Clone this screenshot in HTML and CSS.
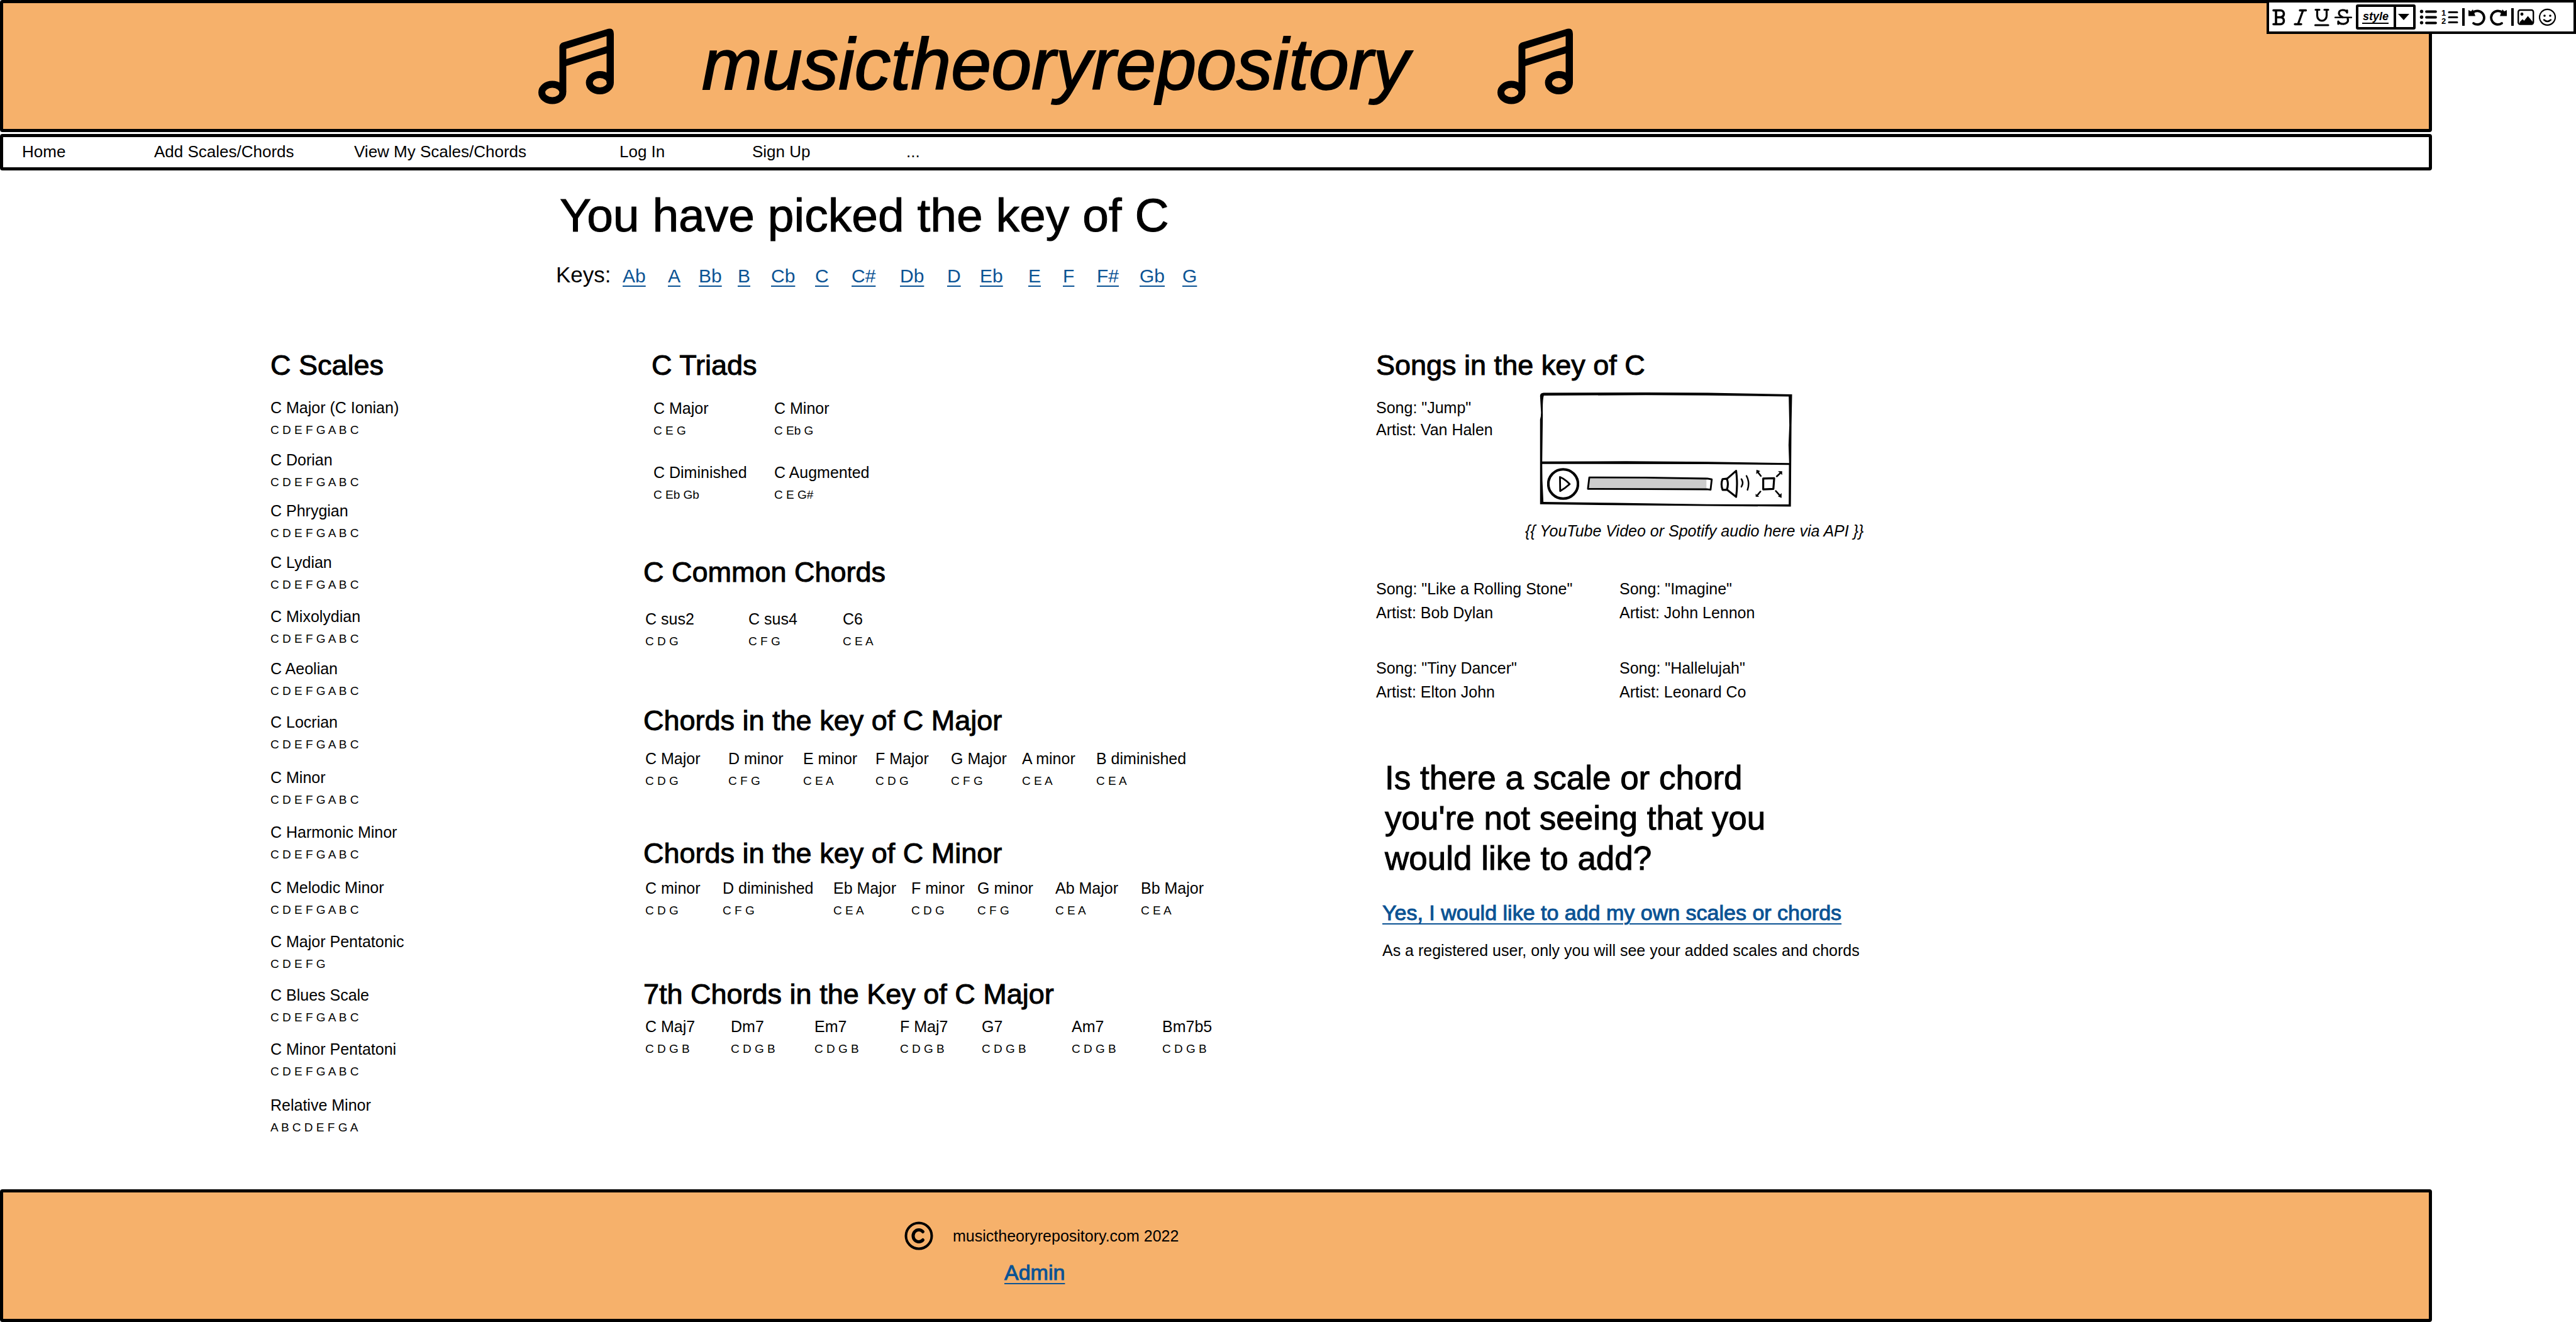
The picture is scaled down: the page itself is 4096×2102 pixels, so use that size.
FILE: index.html
```html
<!DOCTYPE html>
<html lang="en">
<head>
<meta charset="utf-8">
<title>musictheoryrepository</title>
<link rel="stylesheet" href="styles.css">
</head>
<body>
<svg class="defs" aria-hidden="true">
  <symbol id="note" viewBox="0 0 120 121">
    <path fill-rule="evenodd" d="M33.500 101V30Q33.500 25 38 22.800L111 .8Q120-1.500 120 9V87H108.500V40L44.400 60V101ZM44.400 32.700V49L108.500 28.600V12.600Z"/>
    <ellipse cx="22.200" cy="102" rx="16.700" ry="13" fill="none" stroke="#000" stroke-width="11"/>
    <ellipse cx="97.800" cy="86.500" rx="16.700" ry="13" fill="none" stroke="#000" stroke-width="11"/>
  </symbol>
</svg>

<div class="toolbar" role="toolbar" aria-label="Text formatting">
  <button class="tool" aria-label="Bold"><svg viewBox="0 0 28 46"><path d="M5 12.500H16a5.500 5.500 0 0 1 0 11H10M16 23.500a5.500 5.500 0 0 1 0 11H5M9 12.500V34.500" stroke-width="3.600"/></svg></button>
  <button class="tool" aria-label="Italic"><svg viewBox="0 0 28 46"><path d="M13 12.500H22.500M5 34.500H15M18 12.500L10 34.500" stroke-width="3.400"/></svg></button>
  <button class="tool" aria-label="Underline"><svg viewBox="0 0 28 46"><path d="M4 11.500H10M18 11.500H24M6.500 11.500V21a7.500 8 0 0 0 15 0V11.500M3.500 36H24" stroke-width="3.200"/></svg></button>
  <button class="tool" aria-label="Strikethrough"><svg viewBox="0 0 28 46"><path d="M20 16V12.500M20 16C18 10.500 7 10.500 7 17C7 20 9 21.500 13 23.500M21 25.500C23 31 18 34.500 13 34C10 34 8 33 6 31M6 34V30" stroke-width="3.200"/><path d="M1 23.700H27" stroke-width="2.400"/></svg></button>
  <span class="style-picker">
    <select aria-label="Text style"><option>style</option></select>
    <svg class="style-picker__arrow" viewBox="0 0 18 10" aria-hidden="true"><path d="M0 0H18L9 10Z" class="solid"/></svg>
  </span>
  <button class="tool" aria-label="Bulleted list"><svg viewBox="0 0 28 46"><g class="solid"><circle cx="3.500" cy="14.200" r="2.700"/><circle cx="3.500" cy="23.300" r="2.700"/><circle cx="3.500" cy="32.100" r="2.700"/></g><path d="M11 14.500H26M11 23.500H26M11 32.500H26" stroke-width="3.800"/></svg></button>
  <button class="tool" aria-label="Numbered list"><svg viewBox="0 0 28 46"><text x="1" y="21">1</text><text x="1" y="34">2</text><path d="M13 15.500H26M13 23.500H26M13 31.500H26" stroke-width="3"/></svg></button>
  <span class="toolbar__rule"></span>
  <button class="tool" aria-label="Undo"><svg viewBox="0 0 28 46"><path d="M7 16A10.800 10.800 0 1 1 8 33" stroke-width="3.800"/><path class="solid" d="M0 12L4 14 7 11 11 21.500H0Z"/></svg></button>
  <button class="tool" aria-label="Redo"><svg viewBox="0 0 28 46"><path d="M20 16A10.800 10.800 0 1 0 19 33" stroke-width="3.800"/><path class="solid" d="M27 12L23 14 20 11 16 21.500H27Z"/></svg></button>
  <span class="toolbar__rule"></span>
  <button class="tool" aria-label="Insert image"><svg viewBox="0 0 28 46"><rect x="1.200" y="12" width="24" height="22.500" rx="3" stroke-width="2.400"/><circle class="solid" cx="7" cy="18.500" r="2.400"/><path class="solid" d="M3.500 34V31L8 26.500 10.500 29 16.500 21.500 24 30.500V34Z"/></svg></button>
  <button class="tool" aria-label="Insert emoji"><svg viewBox="0 0 28 46"><circle cx="13.500" cy="23.300" r="12.500" stroke-width="2.200"/><circle class="solid" cx="9" cy="21" r="1.800"/><circle class="solid" cx="18" cy="21" r="1.800"/><path d="M8 27.500Q13.500 32.500 19 27.500" stroke-width="2.400"/></svg></button>
</div>

<div class="page">
  <header class="banner">
    <svg class="banner__note" aria-hidden="true"><use href="#note"/></svg>
    <h1>musictheoryrepository</h1>
    <svg class="banner__note" aria-hidden="true"><use href="#note"/></svg>
  </header>

  <nav class="menu">
    <a href="#">Home</a>
    <a href="#">Add Scales/Chords</a>
    <a href="#">View My Scales/Chords</a>
    <a href="#">Log In</a>
    <a href="#">Sign Up</a>
    <a href="#">...</a>
  </nav>

  <main>
    <section class="picker">
      <h2 class="picker__title">You have picked the key of C</h2>
      <div class="keys">
        <span class="keys__label">Keys:</span>
        <a href="#">Ab</a><a href="#">A</a><a href="#">Bb</a><a href="#">B</a><a href="#">Cb</a><a href="#">C</a><a href="#">C#</a><a href="#">Db</a><a href="#">D</a><a href="#">Eb</a><a href="#">E</a><a href="#">F</a><a href="#">F#</a><a href="#">Gb</a><a href="#">G</a>
      </div>
    </section>

    <div class="columns">
      <section>
        <h3>C Scales</h3>
        <dl class="scales">
          <div><dt>C Major (C Ionian)</dt><dd>C D E F G A B C</dd></div>
          <div><dt>C Dorian</dt><dd>C D E F G A B C</dd></div>
          <div><dt>C Phrygian</dt><dd>C D E F G A B C</dd></div>
          <div><dt>C Lydian</dt><dd>C D E F G A B C</dd></div>
          <div><dt>C Mixolydian</dt><dd>C D E F G A B C</dd></div>
          <div><dt>C Aeolian</dt><dd>C D E F G A B C</dd></div>
          <div><dt>C Locrian</dt><dd>C D E F G A B C</dd></div>
          <div><dt>C Minor</dt><dd>C D E F G A B C</dd></div>
          <div><dt>C Harmonic Minor</dt><dd>C D E F G A B C</dd></div>
          <div><dt>C Melodic Minor</dt><dd>C D E F G A B C</dd></div>
          <div><dt>C Major Pentatonic</dt><dd>C D E F G</dd></div>
          <div><dt>C Blues Scale</dt><dd>C D E F G A B C</dd></div>
          <div><dt>C Minor Pentatoni</dt><dd>C D E F G A B C</dd></div>
          <div><dt>Relative Minor</dt><dd>A B C D E F G A</dd></div>
        </dl>
      </section>

      <div>
        <section class="triads">
          <h3>C Triads</h3>
          <dl class="chords chords--triads">
            <div><dt>C Major</dt><dd>C E G</dd></div>
            <div><dt>C Minor</dt><dd>C Eb G</dd></div>
            <div><dt>C Diminished</dt><dd>C Eb Gb</dd></div>
            <div><dt>C Augmented</dt><dd>C E G#</dd></div>
          </dl>
        </section>
        <section class="common">
          <h3>C Common Chords</h3>
          <dl class="chords chords--common">
            <div><dt>C sus2</dt><dd>C D G</dd></div>
            <div><dt>C sus4</dt><dd>C F G</dd></div>
            <div><dt>C6</dt><dd>C E A</dd></div>
          </dl>
        </section>
        <section class="major">
          <h3>Chords in the key of C Major</h3>
          <dl class="chords chords--major">
            <div><dt>C Major</dt><dd>C D G</dd></div>
            <div><dt>D minor</dt><dd>C F G</dd></div>
            <div><dt>E minor</dt><dd>C E A</dd></div>
            <div><dt>F Major</dt><dd>C D G</dd></div>
            <div><dt>G Major</dt><dd>C F G</dd></div>
            <div><dt>A minor</dt><dd>C E A</dd></div>
            <div><dt>B diminished</dt><dd>C E A</dd></div>
          </dl>
        </section>
        <section class="minor">
          <h3>Chords in the key of C Minor</h3>
          <dl class="chords chords--minor">
            <div><dt>C minor</dt><dd>C D G</dd></div>
            <div><dt>D diminished</dt><dd>C F G</dd></div>
            <div><dt>Eb Major</dt><dd>C E A</dd></div>
            <div><dt>F minor</dt><dd>C D G</dd></div>
            <div><dt>G minor</dt><dd>C F G</dd></div>
            <div><dt>Ab Major</dt><dd>C E A</dd></div>
            <div><dt>Bb Major</dt><dd>C E A</dd></div>
          </dl>
        </section>
        <section class="sevenths">
          <h3>7th Chords in the Key of C Major</h3>
          <dl class="chords chords--sevenths">
            <div><dt>C Maj7</dt><dd>C D G B</dd></div>
            <div><dt>Dm7</dt><dd>C D G B</dd></div>
            <div><dt>Em7</dt><dd>C D G B</dd></div>
            <div><dt>F Maj7</dt><dd>C D G B</dd></div>
            <div><dt>G7</dt><dd>C D G B</dd></div>
            <div><dt>Am7</dt><dd>C D G B</dd></div>
            <div><dt>Bm7b5</dt><dd>C D G B</dd></div>
          </dl>
        </section>
      </div>

      <div>
        <section>
          <h3>Songs in the key of C</h3>
          <div class="featured">
            <p class="song">Song: "Jump"<br>Artist: Van Halen</p>
            <figure>
              <div class="player">
                <svg class="player__frame" viewBox="20 30 1285 590" aria-hidden="true">
                  <path d="M24 50Q25 36 42 35L560 33 875 35 1302 43 1299 200 1296 612 870 609 500 606 24 600V170Q31 150 28 120ZM43 49Q36 70 38 150L35 383 460 382 875 385 1287 391 1284 300 1288 200 1285 54 870 48 560 47ZM35 396 36 480 41 588 400 593 870 600 1285 601 1286 401 870 397Z" fill-rule="evenodd"/>
                </svg>
                <div class="player__controls">
                  <button class="play" aria-label="Play"><svg viewBox="63 411 162 162"><ellipse cx="144" cy="492" rx="75" ry="74" stroke-width="13"/><path d="M128 457Q152 466 177 493Q155 513 129 528Z" stroke-width="9"/></svg></button>
                  <label class="seek">
                    <svg viewBox="263 455 639 75" aria-hidden="true"><path class="seek__fill" d="M275 462H868V520H271Z"/><path d="M276 461L560 462 873 467 895 471 889 523 870 521 560 520 269 519Z" stroke-width="9"/></svg>
                    <input type="range" aria-label="Position" value="95">
                  </label>
                  <button class="volume" aria-label="Volume"><svg viewBox="938 426 154 148"><path d="M974 473L1020 433Q1029 500 1020 566L974 530M951 475Q940 500 951 530L972 530Q984 500 972 473Z" stroke-width="10"/><path d="M1047 475Q1060 495 1047 514M1073 459Q1091 493 1078 530" stroke-width="8"/></svg></button>
                  <button class="expand" aria-label="Full screen"><svg viewBox="1115 424 142 148"><path d="M1158 471L1213 469 1209 523 1158 525Z" stroke-width="10"/><path d="M1146 458L1132 440M1226 460L1242 445M1144 536L1130 553M1221 533L1238 552" stroke-width="8"/><path class="solid" d="M1124 427L1143 433 1123 448ZM1232 434H1253V453ZM1120 547L1138 563 1120 562ZM1250 544V568L1232 560Z"/></svg></button>
                </div>
              </div>
              <figcaption>{{ YouTube Video or Spotify audio here via API }}</figcaption>
            </figure>
          </div>
          <div class="songs">
            <p class="song">Song: "Like a Rolling Stone"<br>Artist: Bob Dylan</p>
            <p class="song">Song: "Imagine"<br>Artist: John Lennon</p>
            <p class="song">Song: "Tiny Dancer"<br>Artist: Elton John</p>
            <p class="song">Song: "Hallelujah"<br>Artist: Leonard Co</p>
          </div>
        </section>
        <section class="prompt">
          <h2 class="prompt__title">Is there a scale or chord<br>you're not seeing that you<br>would like to add?</h2>
          <a class="prompt__link" href="#">Yes, I would like to add my own scales or chords</a>
          <p>As a registered user, only you will see your added scales and chords</p>
        </section>
      </div>
    </div>
  </main>

  <footer>
    <p class="legal">
      <svg viewBox="0 0 46 46" role="img" aria-label="Copyright"><circle cx="23" cy="23" r="20.500" stroke-width="4"/><path d="M29.500 16.500A9 9.500 0 1 0 29.500 29.500" stroke-width="5"/></svg>
      <span>musictheoryrepository.com 2022</span>
    </p>
    <a class="admin" href="#">Admin</a>
  </footer>
</div>
</body>
</html>
```
FILE: styles.css
```css
* { box-sizing: border-box; }

body {
  margin: 0;
  background: #fff;
  color: #000;
  font-family: "Liberation Sans", Arial, sans-serif;
  font-size: 25px;
  line-height: 30px;
}

h1, h2, h3, p, dl, dd, figure { margin: 0; font-weight: 400; }

/* Larger text carries a marker-pen weight */
h2, h3, .prompt__link, .admin { -webkit-text-stroke: 1px; }

button {
  padding: 0;
  border: 0;
  background: none;
  cursor: pointer;
}

button svg, .legal svg, .seek svg {
  display: block;
  width: 100%;
  height: 100%;
  fill: none;
  stroke: #000;
  stroke-linecap: round;
  stroke-linejoin: round;
}

svg .solid { fill: #000; stroke: none; }
.defs { position: absolute; width: 0; height: 0; }

/* Formatting toolbar, floating over the banner */
.toolbar {
  position: absolute;
  top: 0;
  right: 0;
  z-index: 1;
  display: flex;
  align-items: center;
  gap: 6px;
  width: 492px;
  height: 54px;
  padding-left: 2px;
  border: 4px solid #000;
  background: #fff;
}
.tool { width: 28px; height: 46px; }
.tool text {
  fill: #000;
  stroke: none;
  font: bold 13px "Liberation Sans", Arial, sans-serif;
}
.toolbar__rule { width: 4px; height: 28px; background: #000; }
.style-picker { display: grid; align-items: center; width: 95px; }
.style-picker select {
  grid-area: 1 / 1;
  width: 95px;
  height: 40px;
  padding: 0 0 3px 7px;
  appearance: none;
  border: 4px solid #000;
  border-radius: 3px;
  background:
    linear-gradient(#000, #000) 6px 25px / 42px 2px no-repeat,
    linear-gradient(#000, #000) 56px 0 / 4px 100% no-repeat,
    #fff;
  color: #000;
  font: italic bold 18px "Liberation Sans", Arial, sans-serif;
}
.style-picker__arrow {
  grid-area: 1 / 1;
  justify-self: end;
  width: 18px;
  height: 10px;
  margin-right: 10px;
  pointer-events: none;
}

/* Page frame */
.page {
  display: flex;
  flex-direction: column;
  width: 94.4%;
  min-height: 100vh;
}

.banner {
  display: flex;
  align-items: center;
  height: 210px;
  padding-left: 851px;
  border: 5px solid #000;
  border-radius: 4px;
  background: #f6b16b;
}
.banner__note { flex: none; width: 120px; height: 121px; }
.banner h1 {
  margin: 0 140px;
  padding-bottom: 6px;
  font-size: 115px;
  line-height: 132px;
  font-style: italic;
  -webkit-text-stroke: 2px;
}

.menu {
  display: grid;
  grid-template-columns: 210px 318px 422px 211px 245px auto;
  align-items: center;
  height: 58px;
  margin-top: 3px;
  padding: 0 0 3px 30px;
  border: 5px solid #000;
  border-radius: 4px;
  font-size: 26px;
}
.menu a { color: #000; text-decoration: none; }

main { flex: 1; padding-top: 29px; }

.picker { padding-left: 884px; }
.picker__title {
  padding-left: 6px;
  font-size: 75px;
  line-height: 84px;
}
.keys {
  display: grid;
  grid-template-columns: 106px 72px 49px 62px 53px 70px 58px 77px 75px 52px 77px 55px 54px 68px 68px auto;
  justify-items: start;
  align-items: baseline;
  margin-top: 33px;
  font-size: 30px;
  line-height: 40px;
}
.keys__label { font-size: 35px; }

a {
  color: #0b5394;
  text-decoration-thickness: 2px;
  text-underline-offset: 5px;
}

.columns {
  display: grid;
  grid-template-columns: 593px 1165px auto;
  margin-top: 96px;
  padding: 0 0 60px 430px;
}

h3 { font-size: 45px; line-height: 52px; }

dd { margin-top: 9px; font-size: 19px; line-height: 24px; }

.scales {
  display: grid;
  grid-template-rows: 83px 81px 82px 86px 83px 85px 88px 87px 88px 86px 85px 86px 89px;
  margin-top: 26px;
}

/* Chord groups */
.chords { display: grid; padding-left: 3px; }
.triads { padding-left: 13px; }
.common { margin-top: 85px; }
.major { margin-top: 88px; }
.minor { margin-top: 77px; }
.sevenths { margin-top: 95px; }
.chords--triads { grid-template-columns: 192px auto; row-gap: 39px; margin-top: 27px; }
.chords--common { grid-template-columns: 164px 150px auto; margin-top: 33px; }
.chords--major { grid-template-columns: 132px 119px 115px 120px 113px 118px auto; margin-top: 19px; }
.chords--minor { grid-template-columns: 123px 176px 124px 105px 124px 136px auto; margin-top: 14px; }
.chords--sevenths { grid-template-columns: 136px 133px 136px 130px 143px 144px auto; margin-top: 10px; }

/* Songs */
.featured { display: grid; grid-template-columns: 237px auto; margin-top: 16px; }
.song { line-height: 38px; }
.featured .song { padding-top: 8px; line-height: 35px; }
.songs {
  display: grid;
  grid-template-columns: 387px auto;
  row-gap: 50px;
  margin-top: 58px;
}

.player {
  position: relative;
  display: flex;
  flex-direction: column;
  justify-content: flex-end;
  width: 404px;
  height: 185px;
  margin-left: 22px;
}
.player__frame { position: absolute; inset: 0; width: 100%; height: 100%; }
.player__controls {
  position: relative;
  display: flex;
  align-items: center;
  height: 78px;
  padding-left: 13px;
}
.play { width: 51px; height: 51px; margin-right: 12px; }
.seek { display: grid; width: 201px; height: 24px; margin-right: 11px; }
.seek svg, .seek input { grid-area: 1 / 1; }
.seek input { width: 100%; height: 100%; margin: 0; appearance: none; background: none; }
.seek input::-webkit-slider-thumb { appearance: none; width: 1px; height: 1px; }
.seek svg .seek__fill { fill: #ccc; stroke: none; }
.volume { width: 48px; height: 47px; margin-right: 7px; }
.expand { width: 45px; height: 47px; }

figcaption { margin-top: 21px; font-style: italic; }

.prompt { margin-top: 86px; padding-left: 10px; }
.prompt__title { padding-left: 4px; font-size: 53px; line-height: 64px; }
.prompt__link { display: block; width: max-content; margin-top: 34px; font-size: 34px; line-height: 40px; }
.prompt p { margin-top: 25px; }

footer {
  padding: 46px 0 54px;
  border: 5px solid #000;
  border-radius: 4px;
  background: #f6b16b;
}
.legal { display: flex; align-items: center; gap: 31px; padding-left: 1433px; }
.legal svg { flex: none; width: 46px; height: 46px; }
.admin { display: block; width: max-content; margin: 15px 0 0 1592px; font-size: 34px; line-height: 40px; }
```
